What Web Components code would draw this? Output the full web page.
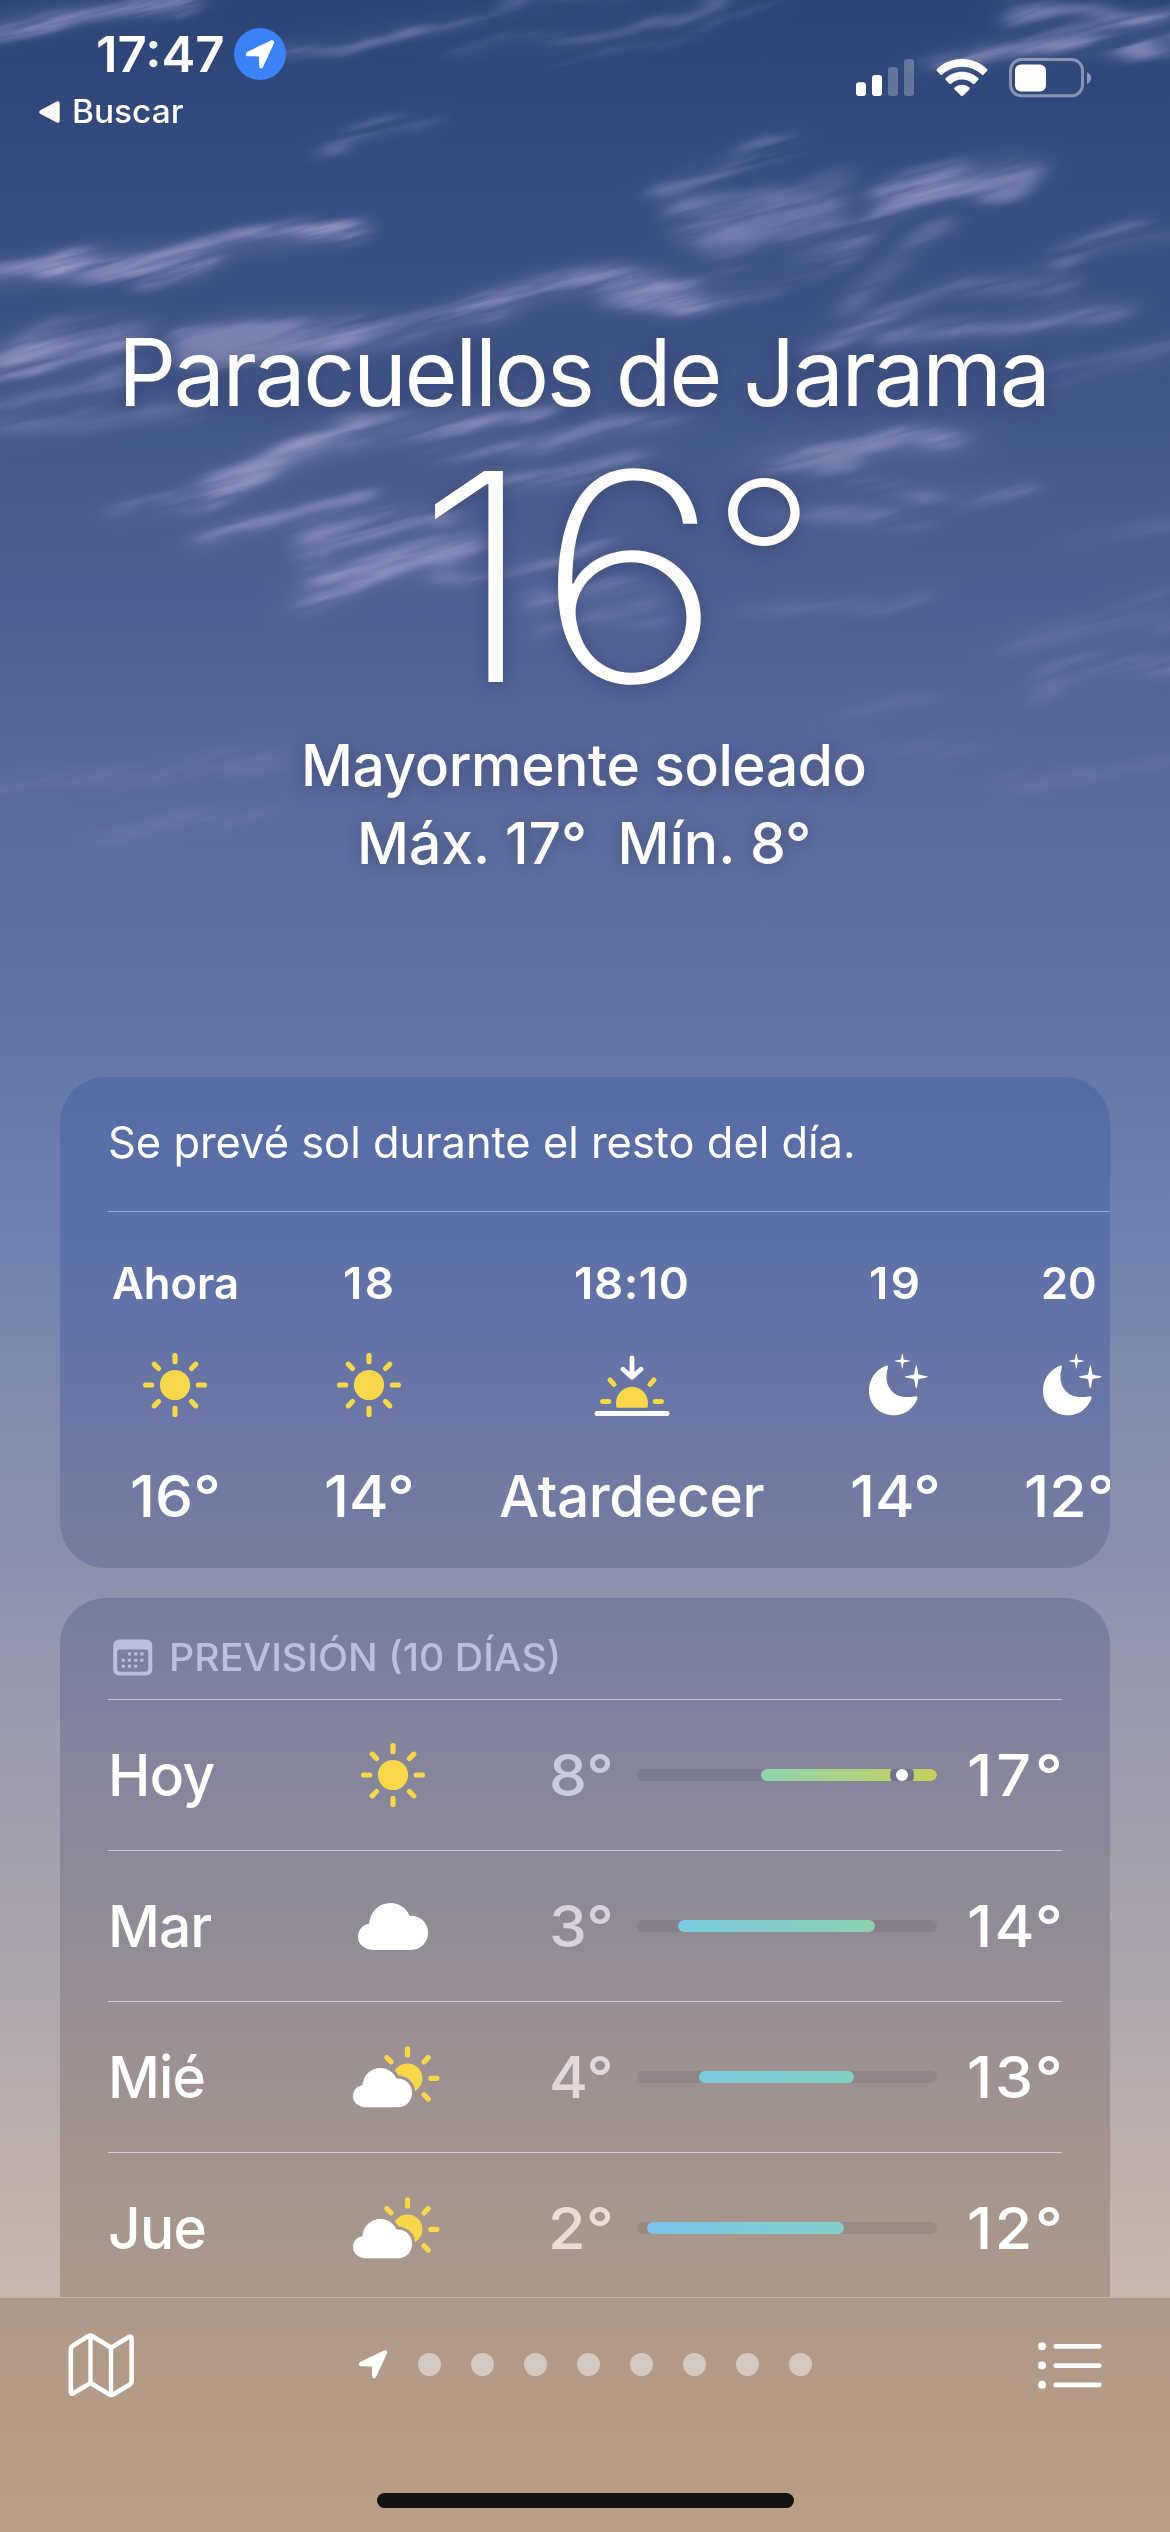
<!DOCTYPE html>
<html lang="es">
<head>
<meta charset="utf-8">
<title>Tiempo</title>
<style>
html,body{margin:0;padding:0}
body{width:1170px;height:2532px;overflow:hidden;font-family:Inter,"Liberation Sans",sans-serif;color:#fff}
</style>
</head>
<body>
<weather-app></weather-app>
<script>
const define=(name,html,after)=>{
  const t=document.createElement('template');t.innerHTML=html;
  customElements.define(name,class extends HTMLElement{
    constructor(){super();this.attachShadow({mode:'open'})}
    connectedCallback(){
      if(this.shadowRoot.childNodes.length)return;
      this.shadowRoot.append(t.content.cloneNode(true));
      if(after)after.call(this,this.shadowRoot);
    }
  });
};

/* One line of text whose ink spans exactly `w` pixels: glyphs widen a little (up to `max`), tracking does the rest */
const ctx=document.createElement('canvas').getContext('2d');
define('fit-text',`<style>:host{display:block;flex:none;white-space:nowrap;text-align:left}span{display:inline-block;transform-origin:0 50%}</style><span><slot></slot></span>`,function(r){
  const w=+this.getAttribute('w'),max=+(this.getAttribute('max')||1.05),s=this.textContent,cs=getComputedStyle(this);
  ctx.font=`${cs.fontWeight} ${cs.fontSize} ${cs.fontFamily}`;
  const m=ctx.measureText(s),ink=m.actualBoundingBoxLeft+m.actualBoundingBoxRight;
  const k=Math.min(max,Math.max(.98,w/ink));
  this.style.width=w+'px';
  const sp=r.querySelector('span');
  sp.style.transform=`scaleX(${k.toFixed(4)})`;
  sp.style.marginLeft=m.actualBoundingBoxLeft*k+'px';
  if(s.length>1)sp.style.letterSpacing=((w/k-ink)/(s.length-1)).toFixed(3)+'px';
});

/* Icons */
const rays=(cx,cy,angles)=>angles.map(a=>{const c=Math.cos(a*Math.PI/180),s=-Math.sin(a*Math.PI/180);
  return `M${(cx+23.3*c).toFixed(2)} ${(cy+23.3*s).toFixed(2)}L${(cx+29.4*c).toFixed(2)} ${(cy+29.4*s).toFixed(2)}`}).join('');
const Y='#f8d74a';
const cloud='M16.5 47C7 47 0 41.500 0 34C0 27 4.500 21.500 11 20.700C12.500 8.500 21 0 32.500 0C41 0 48.500 5 51.500 12.700C62 12.200 70 19.500 70 29.800C70 39.700 62.500 47 53 47Z';
const nav='M1.200 16.300C-.5 15.400-.4 12.600 1.600 11.700L25 .4C27-.5 28.900 1.200 28 3.200L17 27C16.100 28.900 13.100 28.500 13.100 26.300L13 16.400Z';
const star4=(x,y,r)=>{const k=r*.2;return `M${x} ${y-r}C${x+k*.4} ${y-r} ${x+k*.6} ${y-k*2} ${x+k} ${y-k}C${x+k*2} ${y-k*.6} ${x+r} ${y-k*.4} ${x+r} ${y}C${x+r} ${y+k*.4} ${x+k*2} ${y+k*.6} ${x+k} ${y+k}C${x+k*.6} ${y+k*2} ${x+k*.4} ${y+r} ${x} ${y+r}C${x-k*.4} ${y+r} ${x-k*.6} ${y+k*2} ${x-k} ${y+k}C${x-k*2} ${y+k*.6} ${x-r} ${y+k*.4} ${x-r} ${y}C${x-r} ${y-k*.4} ${x-k*2} ${y-k*.6} ${x-k} ${y-k}C${x-k*.6} ${y-k*2} ${x-k*.4} ${y-r} ${x} ${y-r}Z`};
const I={
 sun:[64,64,`<circle cx="32" cy="32" r="15.100" fill="${Y}"/><path d="${rays(32,32,[0,45,90,135,180,225,270,315])}" stroke="${Y}" stroke-width="5.200" stroke-linecap="round"/>`],
 sunset:[76,64,`<g transform="translate(0 11)"><path d="M22.600 43.700A16 16.500 0 1 1 53.400 43.700Z" fill="${Y}"/><path d="${rays(38,37.6,[0,180])}" stroke="${Y}" stroke-width="5" stroke-linecap="round"/><path d="M16 15.800L20 20.400M60 15.800L56 20.400" stroke="${Y}" stroke-width="5" stroke-linecap="round"/><path d="M3 49.600H73" stroke="#fff" stroke-width="5" stroke-linecap="round"/><path d="M38-6V12M29 5.200L38 13.200L47 5.200" stroke="#fff" stroke-width="4.800" stroke-linecap="round" stroke-linejoin="round"/></g>`],
 moon:[60,64,`<g transform="translate(3.500 .7)"><path d="M17.500 12C19 11.300 20 12.500 19.400 14C14 31 24 47 46 42.700C48.600 42.200 49.600 43.200 48.700 45.300C44.500 55.500 36 61.500 26 61.500C10.500 61.500.5 51 .5 36.500C.5 25.500 7 16.300 17.500 12Z" fill="#fff"/><path d="${star4(33.800,7.400,7.600)}${star4(47.800,23.100,11.600)}" fill="#fff"/></g>`],
 cloud:[70,47,`<path d="${cloud}" fill="#fff"/>`],
 partly:[86,60,`<g transform="translate(3 1)"><defs><mask id="m"><rect x="-5" y="-5" width="100" height="80" fill="#fff"/><path d="${cloud}" transform="translate(0 20) scale(.843 .836)" fill="#000" stroke="#000" stroke-width="7.500"/></mask></defs><g mask="url(#m)"><circle cx="54.500" cy="30.300" r="14.900" fill="${Y}"/></g><path d="${rays(54.5,30.3,[0,45,90,135,315])}" stroke="${Y}" stroke-width="5.200" stroke-linecap="round"/><path d="${cloud}" transform="translate(0 20) scale(.843 .836)" fill="#fff"/></g>`],
 calendar:[40,37,`<path fill-rule="evenodd" fill="#bcc0df" d="M7 .5H32.500Q39.300.5 39.300 7V30Q39.300 36.500 32.500 36.500H7Q.2 36.500.2 30V7Q.2.5 7 .5ZM6.500 10.500Q4.200 10.500 4.200 12.700V29.500Q4.200 32.700 7.500 32.700H32Q35.300 32.700 35.300 29.500V12.700Q35.300 10.500 33 10.500Z"/><path stroke="#bcc0df" stroke-width="3.100" stroke-dasharray="3.100 3.100" d="M15 15H31M8.700 21.200H31M8.700 27.300H25.200"/>`],
 nav:[29,29,`<path d="${nav}" fill="#fff"/>`],
 back:[21,22,`<path d="M1.300 9.200L17.300.7Q20.700-.8 20.700 2.800V19.200Q20.700 22.800 17.300 21.300L1.300 12.800Q-1 11 1.300 9.200Z" fill="#fff"/>`],
 map:[66,64,`<path d="M2.800 59.200V16.500Q2.800 14 5 12.600L20 3.200Q22.300 1.900 24.600 3.200L43 14.700L60.800 3.900Q63.600 2.700 63.600 5.500V48Q63.600 50.400 61.500 51.800L45.500 61.200Q43.200 62.500 41 61.200L22.500 50L5.200 60.400Q2.800 61.500 2.800 59.200Z" stroke="#fff" stroke-width="4.600" fill="none" stroke-linejoin="round"/><path d="M22.500 3.500V50M43 14.700V61" stroke="#fff" stroke-width="4.300"/>`],
 list:[64,46,`<g fill="#fff"><circle cx="4" cy="4.300" r="4"/><circle cx="4" cy="23.500" r="4"/><circle cx="4" cy="42.700" r="4"/></g><path d="M17.700 4.300H61.300M17.700 23.600H61.300M17.700 42.900H61.300" stroke="#fff" stroke-width="4.800" stroke-linecap="round"/>`],
 signal:[58,38,`<g fill="#fff"><rect x="0" y="23.200" width="10" height="13.800" rx="3"/><rect x="16" y="16" width="10" height="21" rx="3"/><g opacity=".25"><rect x="32" y="8" width="10" height="29" rx="3"/><rect x="48" width="10" height="37" rx="3"/></g></g>`],
 wifi:[52,38,`<path fill="#fff" d="M26 0C35.800 0 44.600 3.800 51 10Q52 11 51 12L47.700 15.400Q46.700 16.400 45.700 15.400C40.500 10.600 33.500 7.700 26 7.700S11.500 10.600 6.300 15.400Q5.300 16.400 4.300 15.400L1 12Q0 11 1 10C7.400 3.800 16.200 0 26 0ZM26 12.800C32.300 12.800 38 15.200 42.200 19.100Q43.200 20.100 42.200 21.100L38.600 24.700Q37.600 25.500 36.600 24.700C33.800 22.100 30.100 20.600 26 20.600S18.200 22.100 15.400 24.700Q14.400 25.500 13.400 24.700L9.800 21.100Q8.800 20.100 9.800 19.100C14 15.200 19.700 12.800 26 12.800ZM26 25.700C28.900 25.700 31.500 26.800 33.400 28.500Q34.300 29.400 33.400 30.400L27 36.700Q26 37.600 25 36.700L18.600 30.400Q17.700 29.400 18.600 28.500C20.500 26.800 23.100 25.700 26 25.700Z"/>`],
 battery:[83,40,`<rect x="1.500" y="1.500" width="72" height="36.300" rx="11" fill="none" stroke="#fff" stroke-opacity=".42" stroke-width="3"/><path d="M78 14.300Q82 15.700 82 20T78 26Z" fill="#fff" opacity=".45"/><rect x="6" y="6.500" width="31" height="27" rx="6" fill="#fff"/>`]
};
define('wx-icon',`<style>:host{display:block;flex:none;line-height:0}svg{display:block;overflow:visible}</style>`,function(r){
  const [w,h,b]=I[this.getAttribute('name')];
  const d=document.createElement('div');
  d.innerHTML=`<svg width="${w}" height="${h}" viewBox="0 0 ${w} ${h}" fill="none">${b}</svg>`;
  r.append(d);
});

/* Sky with wisps of cirrus: [stroke width, strength, path] */
const W=[
 [14,.5,'M-20 30Q80 10 190 0'],[5,.4,'M283 50Q420 24 640-6'],[4,.35,'M450 55Q600 30 720 0'],[3,.3,'M560 55Q680 30 780 0'],
 [8,.5,'M930 62Q1040 42 1180 48'],[8,.42,'M1010 10Q1100 12 1180 32'],[7,.4,'M980 50Q1080 32 1170 14'],
 [14,.62,'M-10 274Q90 260 200 268'],[12,.36,'M60 260Q200 254 350 232'],[9,.5,'M230 240Q300 240 360 230'],[5,.3,'M330 146Q370 130 430 122'],
 [34,.4,'M200 345Q290 333 350 338'],[18,.42,'M340 342Q440 326 500 306'],[16,.46,'M470 312Q560 272 610 286T700 290'],[10,.36,'M560 284Q620 254 680 294'],
 [10,.26,'M690 296Q800 279 870 229T930 188'],[24,.4,'M900 198Q960 173 1020 169'],[12,.24,'M850 250Q900 195 960 184'],
 [46,.2,'M700 225Q760 210 830 232'],[36,.14,'M720 250Q780 205 840 200'],[9,.3,'M660 195Q700 168 785 140'],[14,.2,'M665 190Q700 220 740 250'],
 [7,.5,'M815 346Q880 324 960 279'],[14,.22,'M850 309Q900 259 950 224'],[12,.3,'M880 339Q1000 322 1120 306'],[14,.22,'M970 289Q1020 274 1060 279'],[14,.28,'M1060 252Q1110 239 1180 236'],
 [16,.45,'M-10 359Q60 356 130 344'],[26,.22,'M20 354Q60 334 130 329'],[16,.26,'M-10 409Q60 394 130 379'],[12,.18,'M-10 434Q100 424 200 399'],
 [18,.54,'M212 492Q267 464 317 448'],[14,.46,'M307 450Q407 432 477 416'],[12,.36,'M337 424Q437 419 547 404'],[8,.32,'M427 456Q547 444 687 419'],
 [10,.42,'M203 544Q257 519 357 507'],[6,.26,'M107 514Q157 509 207 509'],
 [16,.46,'M307 602Q357 574 447 556'],[16,.46,'M317 576Q387 559 477 539'],[14,.42,'M307 549Q367 524 447 512'],[8,.38,'M437 581Q527 569 607 552'],
 [10,.28,'M527 601Q587 584 657 589'],[14,.16,'M547 624Q607 604 667 612'],[12,.3,'M487 484Q567 484 637 459'],
 [14,.36,'M757 458Q857 444 967 448'],[16,.28,'M877 444Q897 429 947 444'],[8,.32,'M862 479Q907 496 1017 492'],[12,.22,'M787 519Q857 514 917 522'],
 [8,.18,'M1070 544Q1120 529 1180 522'],[16,.15,'M1010 642Q1100 624 1180 622'],[12,.2,'M1040 684Q1110 669 1180 666'],[8,.15,'M1120 604L1180 589'],
 [8,.15,'M740 614Q850 604 930 589'],[14,.11,'M-10 782Q130 776 270 754'],[10,.09,'M100 829Q200 819 260 809'],[12,.09,'M840 719Q880 704 920 699'],[8,.09,'M800 774Q900 759 990 744'],[10,.08,'M1000 784Q1100 774 1180 764'],[10,.16,'M1050 379L1180 349']
];
define('sky-view',`<style>
:host{position:absolute;inset:0;overflow:hidden;background:linear-gradient(#2c4375 0,#30487a 100px,#3a4f82 260px,#445888 430px,#4d5f92 600px,#576799 760px,#5f709f 900px,#6677a4 1060px,#7081ae 1230px,#7f8bb0 1400px,#8b91ad 1560px,#9497ae 1640px,#9f9eae 1800px,#aea6ad 2000px,#c0b0ab 2180px,#c9b8ae 2297px)}
svg{display:block}</style>
<svg width="1170" height="960" viewBox="0 0 1170 960">
<defs>
<filter id="wisp" filterUnits="userSpaceOnUse" x="-350" y="-100" width="1700" height="1300" color-interpolation-filters="sRGB">
<feTurbulence type="fractalNoise" baseFrequency=".007 .018" numOctaves="4" seed="7" result="n"/>
<feDisplacementMap in="SourceGraphic" in2="n" scale="50" xChannelSelector="R" yChannelSelector="G" result="d"/>
<feGaussianBlur in="d" stdDeviation="10 3.200" result="b"/>
<feTurbulence type="fractalNoise" baseFrequency=".005 .055" numOctaves="5" seed="21"/>
<feColorMatrix values="0 0 0 0 1 0 0 0 0 1 0 0 0 0 1 3 0 0 0 -.85" result="s"/>
<feComposite in="b" in2="s" operator="in"/>
</filter>
<filter id="haze" filterUnits="userSpaceOnUse" x="-350" y="-100" width="1700" height="1300"><feGaussianBlur stdDeviation="20 9"/></filter></defs>
<g transform="rotate(-15)" filter="url(#haze)" opacity=".28"><g class="w" transform="rotate(15)"></g></g>
<g transform="rotate(-15)" filter="url(#wisp)" opacity=".88"><g class="w" transform="rotate(15)"></g></g></svg>`,function(r){
  r.querySelectorAll('.w').forEach(g=>{
    g.innerHTML=W.map(([s,o,d])=>`<path d="${d}" fill="none" stroke="#a0a2cc" stroke-linecap="round" stroke-width="${s*1.35}" opacity="${Math.min(1,o*1.5)}"/>`).join('');
  });
});

define('status-bar',`<style>
:host{display:flex;justify-content:space-between;height:150px;box-sizing:border-box;padding:28px 78px 0 39px}
.l{display:flex;flex-direction:column;gap:13px}
.t{display:flex;align-items:center;gap:11px;height:52px;padding-left:59px;font-size:49.500px;font-weight:600;line-height:52px}
.loc{width:52px;height:52px;border-radius:50%;background:#3b82f7;display:grid;place-items:center}
.b{display:flex;align-items:center;gap:14px;font-size:32.500px;font-weight:500;line-height:38px}
.r{display:flex;align-items:flex-start;padding-top:31px}
.r :nth-child(2){margin-left:22px}.r :nth-child(3){margin:-1.300px 0 0 21px}
</style><div class="l"><div class="t"><fit-text w="125">17:47</fit-text><div class="loc"><wx-icon name="nav"></wx-icon></div></div>
<div class="b"><wx-icon name="back"></wx-icon><fit-text w="109">Buscar</fit-text></div></div>
<div class="r"><wx-icon name="signal"></wx-icon><wx-icon name="wifi"></wx-icon><wx-icon name="battery"></wx-icon></div>`);

define('current-weather',`<style>
:host{display:flex;flex-direction:column;align-items:center;height:927px;box-sizing:border-box;padding-top:162px;text-shadow:0 3px 16px rgba(20,30,70,.3)}
.c{font-size:93px;font-weight:400;line-height:120px}
.t{display:flex;gap:27px;height:290px;margin-bottom:4px;font-size:290px;font-weight:200;line-height:290px;padding-left:65px}
.o{font-size:223px;font-weight:250;line-height:258px}
.s{font-size:58px;font-weight:500;line-height:78px}
</style><fit-text class="c" w="919">Paracuellos de Jarama</fit-text><div class="t"><fit-text w="266" max="1.120">16</fit-text><fit-text class="o" w="72">°</fit-text></div>
<fit-text class="s" w="560">Mayormente soleado</fit-text><fit-text class="s" w="448">Máx. 17°&nbsp; Mín. 8°</fit-text>`);

define('wx-card',`<style>:host{display:block;box-sizing:border-box;width:1050px;margin-left:60px;border-radius:46px;overflow:hidden;background:var(--bg);padding-left:48px}</style><slot></slot>`);

define('hour-item',`<style>:host{display:flex;flex-direction:column;align-items:center;flex:none;width:133px;margin-left:var(--g,0)}
.h{font-size:43.600px;font-weight:600;line-height:60px}.i{height:64px;margin:39px 0 45px;display:flex}.v{font-size:58px;font-weight:500;line-height:68px}</style>
<div class="h"></div><div class="i"></div><div class="v"></div>`,function(r){
  const [h,hw,ic,v,vw]=this.dataset.v.split('|');
  r.querySelector('.h').innerHTML=`<fit-text w="${hw}">${h}</fit-text>`;
  r.querySelector('.i').innerHTML=`<wx-icon name="${ic}"></wx-icon>`;
  r.querySelector('.v').innerHTML=`<fit-text w="${vw}">${v}</fit-text>`;
});

define('hourly-card',`<style>:host{display:block}
wx-card{height:491px;--bg:linear-gradient(#576ca5,#5b70a9 133px,#6373a7 250px,#6c78a4 350px,#767da0)}
.m{height:135px;box-sizing:border-box;padding-top:35px;border-bottom:1px solid #97a6dc;font-size:43.500px;line-height:60px}
.m fit-text{margin-left:2px}
.r{display:flex;padding-top:42px}</style>
<wx-card><div class="m"><fit-text w="743">Se prevé sol durante el resto del día.</fit-text></div>
<div class="r">
<hour-item data-v="Ahora|124|sun|16°|85"></hour-item>
<hour-item style="--g:61px" data-v="18|47|sun|14°|85"></hour-item>
<hour-item style="--g:65px;width:264px" data-v="18:10|111|sunset|Atardecer|264"></hour-item>
<hour-item style="--g:64px" data-v="19|47|moon|14°|85"></hour-item>
<hour-item style="--g:41px" data-v="20|52|moon|12°|85"></hour-item>
</div></wx-card>`);

define('day-row',`<style>:host{display:flex;align-items:center;height:151px;box-sizing:border-box;width:954px;border-top:1px solid rgba(238,232,246,.66);font-size:58px;font-weight:500;line-height:70px}
.d{width:200px;padding-left:var(--dx,4px);box-sizing:border-box}.ic{width:170px;display:flex;justify-content:center}
.lo{width:132px;display:flex;justify-content:flex-end;color:var(--lo)}
.bar{width:300px;height:12px;border-radius:6px;background:rgba(60,55,75,.13);margin-left:27px;display:flex;overflow:hidden}
.f{height:12px;border-radius:6px;position:relative}
.p{position:absolute;top:0;width:12px;height:12px;border-radius:50%;background:#fff;box-shadow:0 0 0 6px #71728b}
.hi{width:122px;display:flex;justify-content:flex-end}</style>
<div class="d"></div><div class="ic"></div><div class="lo"></div><div class="bar"><div class="f"></div></div><div class="hi"></div>`,function(r){
  const [d,dw,ic,lo,hi,x,w,c1,c2,p]=this.dataset.v.split('|'),q=s=>r.querySelector(s);
  q('.d').innerHTML=`<fit-text w="${dw}">${d}</fit-text>`;
  q('.ic').innerHTML=`<wx-icon name="${ic}"></wx-icon>`;
  q('.lo').innerHTML=`<fit-text w="58">${lo}</fit-text>`;
  q('.hi').innerHTML=`<fit-text w="90">${hi}</fit-text>`;
  q('.f').style.cssText=`margin-left:${x}px;width:${w}px;background:linear-gradient(90deg,${c1},${c2})`;
  if(p)q('.f').innerHTML=`<div class="p" style="left:${p}px"></div>`;
});

define('daily-card',`<style>:host{display:block;margin-top:30px;height:699px;overflow:hidden}
wx-card{height:760px;--bg:linear-gradient(#767e9f,#7f819e 90px,#87869b 190px,#8f8a97 310px,#998e94 410px,#a0928f 510px,#a7968c 610px,#ab998a 699px)}
.h{display:flex;align-items:center;height:101px;box-sizing:border-box;padding:17px 0 0 5px;gap:19px;font-size:38.500px;font-weight:450;line-height:50px;color:#bcc0df}</style>
<wx-card><div class="h"><wx-icon name="calendar"></wx-icon><fit-text w="386">PREVISIÓN (10 DÍAS)</fit-text></div>
<day-row style="--lo:#cacae1" data-v="Hoy|103|sun|8°|17°|124|176|#8fd3ae|#c8cf5b|135"></day-row>
<day-row style="--lo:#d8d2df" data-v="Mar|100|cloud|3°|14°|41|197|#7bcae2|#8bd1b0"></day-row>
<day-row style="--lo:#e2d9dd" data-v="Mié|92|partly|4°|13°|62|155|#7ccbdd|#82d0c2"></day-row>
<day-row style="--lo:#ecddd6;--dx:2px" data-v="Jue|95|partly|2°|12°|10|197|#7ac5ea|#80cfca"></day-row></wx-card>`);

define('tab-bar',`<style>:host{display:flex;flex-direction:column;align-items:center;height:235px;box-sizing:border-box;border-top:1px solid #c5b4a7;background:linear-gradient(#ab9a8b,#b19a89 45px,#b49b87 105px,#b89d84 165px,#bc9e83)}
.r{display:flex;align-items:center;justify-content:space-between;width:1034px;height:133px}
.p{display:flex;align-items:center;gap:30px;margin-left:-2px}.p i{width:23px;height:23px;border-radius:50%;background:#d5c8bf}
.home{width:417px;height:15px;border-radius:8px;background:#131313;margin-top:62px}</style>
<div class="r"><wx-icon name="map"></wx-icon><div class="p"><wx-icon name="nav"></wx-icon><i></i><i></i><i></i><i></i><i></i><i></i><i></i><i></i></div><wx-icon name="list"></wx-icon></div><div class="home"></div>`);

define('weather-app',`<style>:host{display:block;position:relative;width:1170px;height:2532px;overflow:hidden}main{position:relative;display:flex;flex-direction:column}</style>
<sky-view></sky-view><main><status-bar></status-bar><current-weather></current-weather><hourly-card></hourly-card><daily-card></daily-card><tab-bar></tab-bar></main>`);
</script>
</body>
</html>
